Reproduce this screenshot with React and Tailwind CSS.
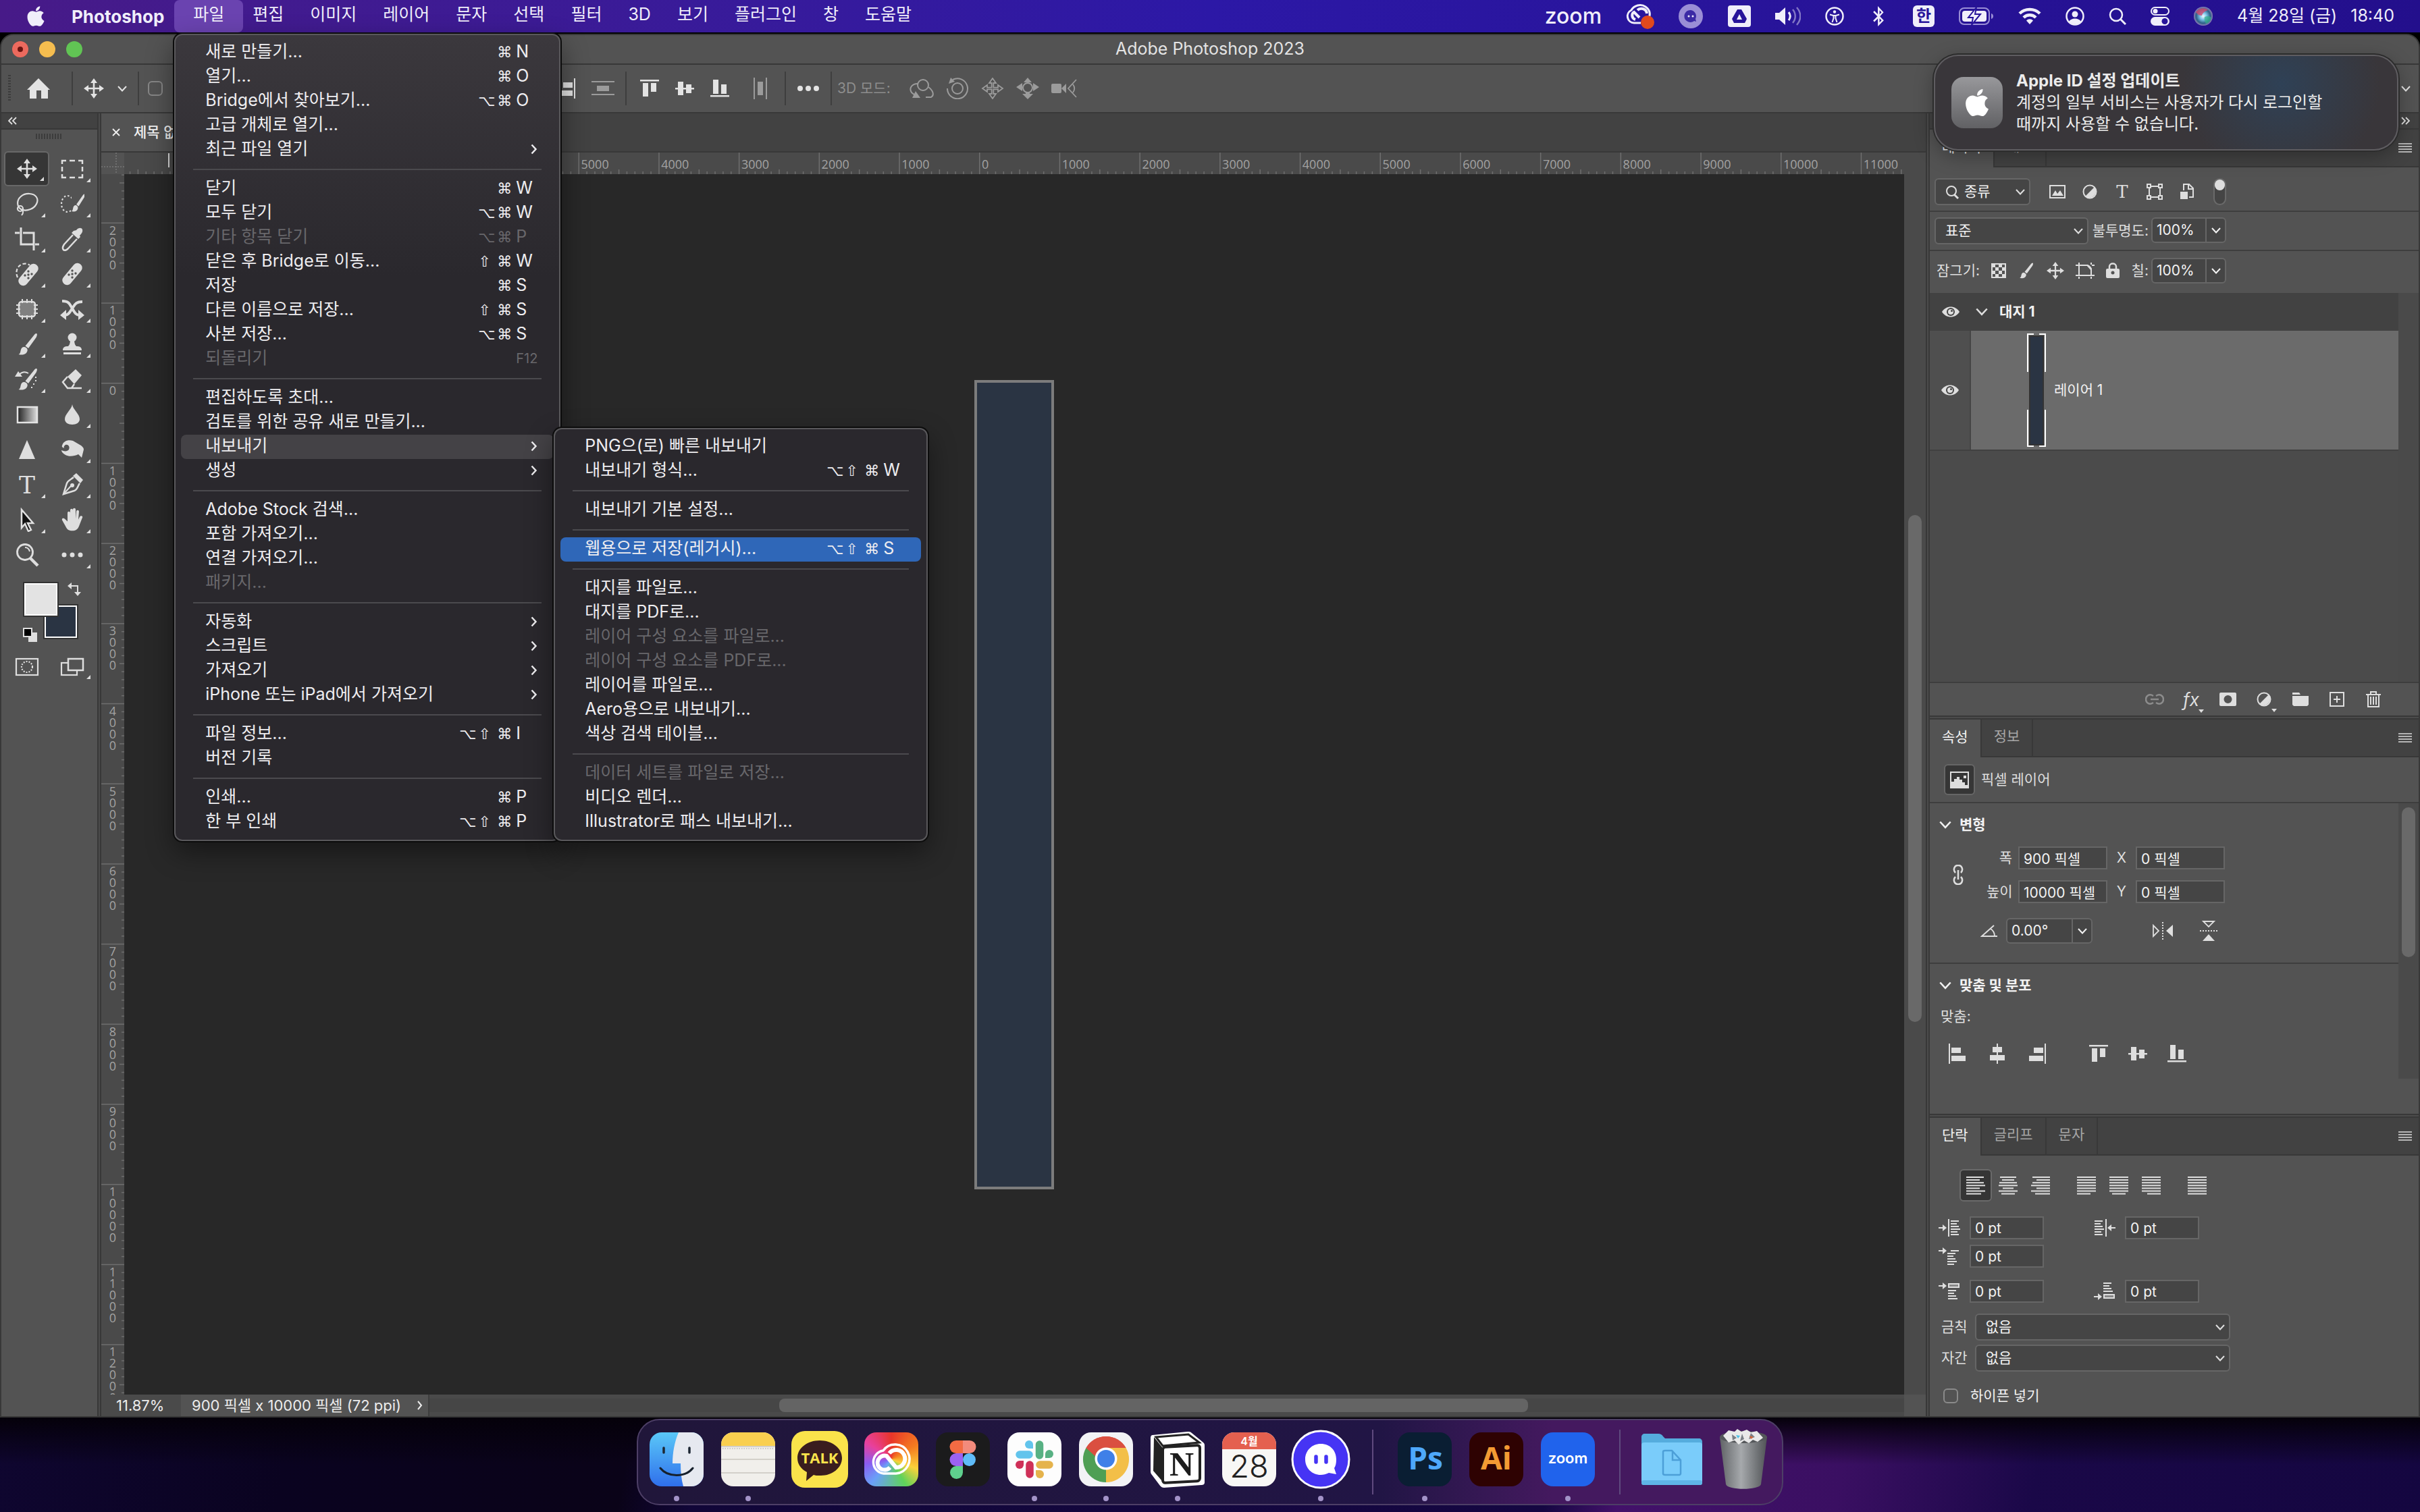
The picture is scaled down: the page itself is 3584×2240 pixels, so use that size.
import React, { useState } from 'react';
import { FaApple, FaBluetoothB } from 'react-icons/fa';

// DATA MENU
const barMenus = ['편집', '이미지', '레이어', '문자', '선택', '필터', '3D', '보기', '플러그인', '창', '도움말'];

const exportMenu = [
  { label: 'PNG으(로) 빠른 내보내기' },
  { label: '내보내기 형식...', keys: '⌥⇧⌘W' },
  null,
  { label: '내보내기 기본 설정...' },
  null,
  { label: '웹용으로 저장(레거시)...', keys: '⌥⇧⌘S', active: true },
  null,
  { label: '대지를 파일로...' },
  { label: '대지를 PDF로...' },
  { label: '레이어 구성 요소를 파일로...', off: true },
  { label: '레이어 구성 요소를 PDF로...', off: true },
  { label: '레이어를 파일로...' },
  { label: 'Aero용으로 내보내기...' },
  { label: '색상 검색 테이블...' },
  null,
  { label: '데이터 세트를 파일로 저장...', off: true },
  { label: '비디오 렌더...' },
  { label: 'Illustrator로 패스 내보내기...' },
];

const fileMenu = [
  { label: '새로 만들기...', keys: '⌘N' },
  { label: '열기...', keys: '⌘O' },
  { label: 'Bridge에서 찾아보기...', keys: '⌥⌘O' },
  { label: '고급 개체로 열기...' },
  { label: '최근 파일 열기', more: true },
  null,
  { label: '닫기', keys: '⌘W' },
  { label: '모두 닫기', keys: '⌥⌘W' },
  { label: '기타 항목 닫기', keys: '⌥⌘P', off: true },
  { label: '닫은 후 Bridge로 이동...', keys: '⇧⌘W' },
  { label: '저장', keys: '⌘S' },
  { label: '다른 이름으로 저장...', keys: '⇧⌘S' },
  { label: '사본 저장...', keys: '⌥⌘S' },
  { label: '되돌리기', fkey: 'F12', off: true },
  null,
  { label: '편집하도록 초대...' },
  { label: '검토를 위한 공유 새로 만들기...' },
  { label: '내보내기', more: true, sub: exportMenu },
  { label: '생성', more: true },
  null,
  { label: 'Adobe Stock 검색...' },
  { label: '포함 가져오기...' },
  { label: '연결 가져오기...' },
  { label: '패키지...', off: true },
  null,
  { label: '자동화', more: true },
  { label: '스크립트', more: true },
  { label: '가져오기', more: true },
  { label: 'iPhone 또는 iPad에서 가져오기', more: true },
  null,
  { label: '파일 정보...', keys: '⌥⇧⌘I' },
  { label: '버전 기록' },
  null,
  { label: '인쇄...', keys: '⌘P' },
  { label: '한 부 인쇄', keys: '⌥⇧⌘P' },
];

// ICON HELPERS
const Svg = ({ w = 36, h = 36, vb, className = '', children }) => (
  <svg width={w} height={h} viewBox={vb || `0 0 ${w} ${h}`} className={`shrink-0 ${className}`} fill="currentColor" aria-hidden="true">
    {children}
  </svg>
);

const Line = ({ d, sw = 2.5, ...rest }) => <path d={d} fill="none" stroke="currentColor" strokeWidth={sw} {...rest} />;

const Down = ({ w = 14, h = 9, className = '' }) => (
  <Svg w={w} h={h} vb="0 0 14 9" className={className}><Line d="M1 1l6 6.5L13 1" sw={2} /></Svg>
);

const movePath = 'M15 0l5 7h-3.7v6.7H23V10l7 5-7 5v-3.7h-6.7V23H20l-5 7-5-7h3.7v-6.7H7V20l-7-5 7-5v3.7h6.7V7H10z';
const MoveIcon = ({ size = 30 }) => <Svg w={size} h={size} vb="0 0 30 30"><path d={movePath} /></Svg>;

const brushShape = (
  <>
    <path d="M32 2c1.500 .5 1 3-.5 6L20 24l-4.500-3.500L28 5c1.500-2 2.800-3.300 4-3z" />
    <path d="M14 22c3 .5 5.500 3 4.500 6-1.500 5-7 6.500-13 5 3-1.500 2.500-4 3.500-7 .8-2.700 2.700-4.300 5-4z" />
  </>
);

const bandage = (
  <>
    <rect x="-7" y="-19" width="14" height="38" rx="7" transform="translate(18 18) rotate(40)" />
    <g fill="#535353">
      <circle cx="18" cy="13" r="1.700" /><circle cx="23" cy="17" r="1.700" />
      <circle cx="18" cy="18" r="1.700" /><circle cx="13" cy="19" r="1.700" /><circle cx="18" cy="23" r="1.700" />
    </g>
  </>
);

const tools = [
  { name: '이동', active: true, art: <path d={movePath} transform="translate(3 3)" /> },
  { name: '사각형 선택', art: <Line d="M3 11V6h6M14 6h8M27 6h6v5M33 15v7M33 26v5h-6M22 31h-8M9 31H3v-5M3 22v-7" /> },
  {
    name: '올가미',
    art: (
      <>
        <Line d="M9 26C3 22 2 13 9 7s19-5 23 1-1 15-9 18c-5 2-10 2-14 0" sw={2.200} />
        <circle cx="8" cy="25" r="4" fill="none" stroke="currentColor" strokeWidth="2.200" />
        <Line d="M9 26c4 2 4 5 1 9" sw={2} />
      </>
    ),
  },
  {
    name: '빠른 선택',
    art: (
      <>
        <ellipse cx="11" cy="18" rx="9" ry="12" fill="none" stroke="currentColor" strokeWidth="2.200" strokeDasharray="2.500 3" />
        <rect x="17" y="2" width="19" height="32" fill="#535353" />
        <g transform="translate(13 2) scale(.72 .82)">{brushShape}</g>
      </>
    ),
  },
  { name: '자르기', art: <Line d="M9 1v25h19M0 9h7M12 9h16v26M30 26h6" sw={3} /> },
  {
    name: '스포이드',
    art: (
      <>
        <path d="M24 5c3-4 8-4 9-1s-1 6-4 9l1 2-3 3L17 9l3-3z" />
        <Line d="M19 12L6 26c-2 3-3 6-1 8s5 0 7-2l13-14" sw={2.500} />
      </>
    ),
  },
  {
    name: '스팟 복구',
    art: (
      <>
        <Line d="M4 23C0 14 4 5 12 3c4-1 8 0 10 2" sw={2.200} strokeDasharray="5 3" />
        <g transform="translate(2 1)">{bandage}</g>
      </>
    ),
  },
  { name: '복구', art: bandage },
  {
    name: '패치',
    art: (
      <>
        <rect x="6" y="7" width="24" height="22" rx="4" fill="#808080" stroke="currentColor" strokeWidth="2.500" />
        <Line d="M11 3v6M18 3v6M25 3v6M11 27v6M18 27v6M25 27v6M2 12h6M2 18h6M2 24h6M28 12h6M28 18h6M28 24h6" sw={2} />
      </>
    ),
  },
  {
    name: '내용 인식 이동',
    art: (
      <>
        <Line d="M3 6c10 0 11 4 15 11s6 10 11 10M33 7c-10 0-11 4-15 10s-6 10-11 10" sw={4} />
        <path d="M27 19l9 8-9 7zM9 19l-9 8 9 7z" />
      </>
    ),
  },
  { name: '브러시', art: brushShape },
  {
    name: '도장',
    art: (
      <>
        <circle cx="18" cy="8" r="6.500" />
        <path d="M15 10h6c0 4 0 8 3 11 5 0 8 1 8 6H4c0-5 3-6 8-6 3-3 3-7 3-11z" />
        <rect x="5" y="30" width="26" height="3" />
      </>
    ),
  },
  {
    name: '작업 내역 브러시',
    art: (
      <>
        {brushShape}
        <Line d="M6 12c3-5 9-6 14-3" sw={2} />
        <path d="M0 14l5-8 6 8z" />
        <Line d="M31 14v8M28 24v4M25 29v4" sw={2} strokeDasharray="2 3" />
      </>
    ),
  },
  {
    name: '지우개',
    art: (
      <>
        <path d="M23 3l9 9-11 13-10-11z" />
        <Line d="M11 14l-7 8 7 9h6l4-6M10 31h22" sw={2.500} />
      </>
    ),
  },
  {
    name: '그레이디언트',
    solo: true,
    art: (
      <>
        <defs>
          <linearGradient id="toolGrad"><stop offset="0" stopColor="#222" /><stop offset="1" stopColor="#ddd" /></linearGradient>
        </defs>
        <rect x="4" y="7" width="29" height="23" fill="url(#toolGrad)" stroke="#e3e3e3" strokeWidth="2.500" />
      </>
    ),
  },
  { name: '흐림', art: <path d="M18 3c1 8 11 14 11 22 0 5-5 8-11 8S7 30 7 25C7 17 17 11 18 3z" /> },
  { name: '선명', solo: true, art: <path d="M18 4l12 28H6z" /> },
  {
    name: '번',
    art: <path fillRule="evenodd" d="M3 12C5 5 12 3 19 5l12 7c2 2 4 3 4 6l-3 12-5-5c-6 3-14 4-19 1-4-2-6-5-6-7 4 2 9 2 11-1 2-4-1-8-5-7-2 1-3 3-2 5-2-1-4-2-3-4z" />,
  },
  { name: '문자', art: <text x="18" y="31" textAnchor="middle" fontFamily="DejaVu Serif, serif" fontSize="36">T</text> },
  {
    name: '펜',
    art: (
      <>
        <path d="M24 1l10 10-4 5L19 5z" />
        <Line d="M20 7c-3 3-8 4-10 9L5 32l16-5c5-2 5-7 8-11" sw={2.500} />
        <Line d="M5 32l11-12" sw={2} /><circle cx="18" cy="19" r="3" />
      </>
    ),
  },
  { name: '패스 선택', art: <path d="M10 3l17 20h-8l5 10-4 2-5-11-5 6z" fill="#111" stroke="#e0e0e0" strokeWidth="2.500" /> },
  {
    name: '손',
    art: <path d="M9 21V8c0-3 4-3 4 0v9V4c0-3 4-3 4 0v13V3c0-3 4-3 4 0v14l1-11c0-3 4-3 4 0l-1 12 2-4c2-3 5-1 4 1l-5 13c-2 5-5 7-10 7-6 0-8-3-10-7L1 19c-1-3 2-4 4-2z" transform="translate(2 0) scale(1 .98)" />,
  },
  {
    name: '돋보기',
    solo: true,
    art: (
      <>
        <circle cx="15" cy="14" r="11.500" fill="none" stroke="currentColor" strokeWidth="2.800" />
        <Line d="M15 7c4 0 6 2 7 6" sw={2} /><Line d="M23 23l11 11" sw={4.500} />
      </>
    ),
  },
  { name: '도구 모음 편집', art: <><circle cx="6" cy="18" r="3.500" /><circle cx="18" cy="18" r="3.500" /><circle cx="30" cy="18" r="3.500" /></> },
];

// ALIGN ICONS
const alignArt = {
  left: <><rect x="0" y="0" width="2" height="30" /><rect x="4" y="6" width="14" height="8" /><rect x="4" y="18" width="21" height="8" /></>,
  center: <><rect x="13" y="0" width="2" height="30" /><rect x="7" y="5" width="14" height="8" /><rect x="3" y="17" width="22" height="8" /></>,
  right: <><rect x="26" y="0" width="2" height="30" /><rect x="10" y="6" width="14" height="8" /><rect x="3" y="18" width="21" height="8" /></>,
  top: <><rect x="0" y="2" width="28" height="2.500" /><rect x="4" y="7" width="8" height="20" /><rect x="16" y="7" width="8" height="13" /></>,
  middle: <><rect x="0" y="14" width="28" height="2.500" /><rect x="4" y="5" width="8" height="20" /><rect x="16" y="9" width="8" height="13" /></>,
  bottom: <><rect x="0" y="25" width="28" height="2.500" /><rect x="4" y="2" width="8" height="21" /><rect x="16" y="9" width="8" height="14" /></>,
};
const AlignIcon = ({ kind }) => <Svg w={28} h={30}>{alignArt[kind]}</Svg>;

// Baris teks: [x, lebar]
const paraRows = {
  left: [[0, 26], [0, 20], [0, 26], [0, 28], [0, 20], [0, 28], [0, 22]],
  center: [[2, 24], [5, 18], [1, 26], [0, 28], [6, 16], [0, 28], [4, 20]],
  right: [[2, 26], [8, 20], [2, 26], [0, 28], [8, 20], [0, 28], [6, 22]],
  jl: [[0, 28], [0, 28], [0, 28], [0, 28], [0, 28], [0, 28], [0, 20]],
  jc: [[0, 28], [0, 28], [0, 28], [0, 28], [0, 28], [0, 28], [4, 20]],
  jr: [[0, 28], [0, 28], [0, 28], [0, 28], [0, 28], [0, 28], [8, 20]],
  jf: [[0, 28], [0, 28], [0, 28], [0, 28], [0, 28], [0, 28], [0, 28]],
};

const ParaButton = ({ kind, active }) => (
  <button aria-label={`align ${kind}`} className={`flex h-12 w-12 items-center justify-center rounded-md ${active ? 'border-2 border-[#6a6a6a] bg-[#353535]' : ''}`}>
    <Svg w={28} h={27}>
      {paraRows[kind].map(([x, w], i) => <rect key={i} x={x} y={i * 4.100} width={w} height="2" />)}
    </Svg>
  </button>
);

const IndentIcon = ({ kind }) => {
  const rows = (x, y, n) => Array.from({ length: n }, (_, i) => <rect key={i} x={x} y={y + i * 4} width={[12, 9, 12, 14, 10, 12, 12][i]} height="2" />);
  const arrow = (x, y, flip) => (
    <g transform={flip ? `translate(${x + 11} ${y}) scale(-1 1)` : `translate(${x} ${y})`}>
      <rect x="0" y="-1" width="7" height="2" /><path d="M6-5l6 5-6 5z" />
    </g>
  );
  return (
    <Svg w={32} h={28}>
      {kind === 'left' && <>{arrow(0, 14)}<rect x="14" y="1" width="2" height="26" />{rows(18, 3, 6)}</>}
      {kind === 'right' && <>{rows(1, 3, 6)}<rect x="17" y="1" width="2" height="26" />{arrow(21, 14, true)}</>}
      {kind === 'first' && <>{arrow(0, 6)}<rect x="18" y="5" width="12" height="2" />{rows(13, 9, 5)}</>}
      {kind === 'before' && <>{arrow(0, 6)}<rect x="15" y="3" width="15" height="5" fill="#888" stroke="currentColor" strokeWidth="2" />{rows(14, 12, 4)}</>}
      {kind === 'after' && <>{arrow(0, 22)}{rows(14, 1, 4)}<rect x="15" y="19" width="15" height="5" fill="#888" stroke="currentColor" strokeWidth="2" /></>}
    </Svg>
  );
};

// MENU
const Keys = ({ keys }) => (
  <span className="flex items-center pr-7">
    {[...keys].map((k, i) => (
      <span key={i} className={`w-7 ${i === keys.length - 1 ? '' : "font-['DejaVu_Sans',sans-serif] text-[22px]"}`}>{k}</span>
    ))}
  </span>
);

const Menu = ({ items, className }) => (
  <ul role="menu" className={`absolute z-20 rounded-xl border-2 border-[#59585b] bg-[#2a282d] p-2 text-[#eeedf0] shadow-[0_0_0_2px_#0c0c0c,0_16px_40px_rgba(0,0,0,0.45)] ${className}`}>
    {items.map((item, i) =>
      item === null ? (
        <li key={i} role="separator" className="mx-[18px] my-[10px] h-[2px] bg-[#4b4a4e]" />
      ) : (
        <li key={i} className="relative">
          <button
            role="menuitem"
            disabled={item.off}
            className={`flex h-9 w-full items-center justify-between rounded-lg pb-[2px] pl-9 text-left whitespace-nowrap ${item.off ? 'text-[#68676b]' : ''} ${item.active ? 'bg-[#2f67b8]' : ''} ${item.sub ? 'bg-[#444246]' : ''}`}
          >
            <span>{item.label}</span>
            {item.keys && <Keys keys={item.keys} />}
            {item.fkey && <span className="w-14 text-xl">{item.fkey}</span>}
            {item.more && <Svg w={10} h={16} className="mr-6"><Line d="M1.500 1.500l6 6.500-6 6.500" sw={2.500} /></Svg>}
          </button>
          {item.sub && <Menu items={item.sub} className="-top-[10px] left-full w-[554px]" />}
        </li>
      )
    )}
  </ul>
);

const CloudIcon = () => (
  <Svg w={42} h={40}>
    <Line d="M22 30H12A10 10 0 0 1 8 11C12 4 22 1 29 6s8 12 4 18" sw={3} />
    <Line d="M20 22l-8-8c-4 2-4 9 2 11M17 11c4-4 13-3 14 5" sw={4} />
    <circle cx="32" cy="29" r="10" fill="#e0491d" />
  </Svg>
);

const MenuBar = () => (
  <header className="flex h-12 shrink-0 items-center bg-linear-to-r from-[#471a88] via-[#2c18a6] to-[#230f8c] text-[#f0eefa]">
    <nav className="flex h-full items-center pl-10">
      <button aria-label="Apple"><FaApple size={34} className="-mx-1" /></button>
      <button className="ml-10 text-[26px] font-bold">Photoshop</button>
      <div className="relative -mr-[14px] ml-[15px] h-full">
        <button className="h-full rounded-lg bg-[#6a43b0] px-7 pb-1">파일</button>
        <Menu items={fileMenu} className="top-full left-0 mt-[2px] w-[572px] bg-linear-to-b from-[#3b383d] via-[#2a282d] via-30% to-[#2a282d]" />
      </div>
      {barMenus.map((m) => (
        <button key={m} className="-mr-[17px] h-full px-7 pb-1 whitespace-nowrap">{m}</button>
      ))}
    </nav>
    <div className="ml-auto flex items-center gap-9 pr-[38px] whitespace-nowrap">
      <span className="text-[32px] leading-8 font-medium">zoom</span>
      <CloudIcon />
      <Svg w={37} h={37}>
        <circle cx="18" cy="18" r="18" fill="#9a8ed6" />
        <path d="M18 9a9 9 0 1 0 5 16l3 1-1-4A9 9 0 0 0 18 9z" fill="#3b2aa5" />
        <circle cx="15" cy="18" r="1.500" /><circle cx="21" cy="18" r="1.500" />
      </Svg>
      <Svg w={34} h={32}>
        <rect width="34" height="32" rx="4" />
        <path d="M14 6h6l8 14-3 6H9l-3-6z" fill="#27149a" /><path d="M17 13l4 8h-8z" />
      </Svg>
      <Svg w={38} h={32}>
        <path d="M0 11h6l9-8v26l-9-8H0z" />
        <Line d="M20 10c3 4 3 8 0 12" sw={3} /><Line d="M26 6c5 6 5 14 0 20M32 3c7 8 7 18 0 26" sw={2.500} opacity=".45" />
      </Svg>
      <Svg w={28} h={28}>
        <circle cx="14" cy="14" r="12.500" fill="none" stroke="currentColor" strokeWidth="2.500" />
        <circle cx="14" cy="7.500" r="2.200" /><Line d="M7 11.500l5 1.500h4l5-1.500M12.500 13v4l-2 6M15.500 13v4l2 6" sw={2} />
      </Svg>
      <FaBluetoothB size={30} />
      <span className="flex h-8 w-8 items-center justify-center rounded-md bg-[#f0eefa] text-2xl leading-8 font-bold text-[#27149a]">한</span>
      <Svg w={52} h={26}>
        <rect x="1" y="1" width="44" height="24" rx="7" fill="none" stroke="#9a8ed6" strokeWidth="2" />
        <rect x="5" y="5" width="36" height="16" rx="4" />
        <path d="M26 0L14 15h7l-2 11 13-16h-8z" stroke="#27149a" strokeWidth="2" />
        <path d="M48 9c4 1 4 7 0 8z" fill="#9a8ed6" />
      </Svg>
      <Svg w={34} h={26}>
        <Line d="M2 9c8-8 22-8 30 0" sw={4.500} /><Line d="M8 15c5-5 13-5 18 0" sw={4.500} /><path d="M17 25l-5-5.500c3-3 7-3 10 0z" />
      </Svg>
      <Svg w={28} h={28}>
        <circle cx="14" cy="14" r="12.500" fill="none" stroke="currentColor" strokeWidth="2.500" />
        <circle cx="14" cy="11" r="4.500" /><path d="M5 22c3-6 15-6 18 0-5 5-13 5-18 0z" />
      </Svg>
      <Svg w={26} h={26}><circle cx="11" cy="11" r="9" fill="none" stroke="currentColor" strokeWidth="2.500" /><Line d="M17 17l8 8" sw={3} /></Svg>
      <Svg w={28} h={28}>
        <rect x="1" y="1" width="26" height="11" rx="5.500" fill="none" stroke="currentColor" strokeWidth="2" /><circle cx="7" cy="6.500" r="3.500" />
        <rect x="0" y="15" width="28" height="13" rx="6.500" /><circle cx="21" cy="21.500" r="4.500" fill="#27149a" />
      </Svg>
      <Svg w={28} h={28}>
        <defs>
          <radialGradient id="siri">
            <stop offset="0" stopColor="#f2fbff" /><stop offset=".35" stopColor="#7cc4e8" /><stop offset=".75" stopColor="#2c5f86" /><stop offset="1" stopColor="#8f7fb8" />
          </radialGradient>
        </defs>
        <circle cx="14" cy="14" r="14" fill="url(#siri)" />
        <path d="M3 8c4-6 13-8 18-3-4 1-8 4-9 8-4 0-7-2-9-5z" fill="#d2496f" opacity=".8" />
        <path d="M16 15c4-2 8-1 10 1-1 5-4 8-8 9-2-3-3-7-2-10z" fill="#34b28a" opacity=".7" />
      </Svg>
      <span className="-mr-4">4월 28일 (금)</span>
      <span>18:40</span>
    </div>
  </header>
);

const Divider = () => <span className="h-[50px] w-[2px] shrink-0 bg-[#3e3e3e]" />;

const OptionsBar = () => (
  <div className="flex h-[70px] shrink-0 items-center bg-[#535353] text-[#e3e3e3]">
    <span className="ml-[10px] h-10 w-1 bg-[repeating-linear-gradient(#3c3c3c_0_2px,transparent_2px_4px)]" />
    <button aria-label="홈" className="ml-6"><Svg w={34} h={30}><path d="M17 0l17 17h-3v13H21V18h-7v12H4V17H0z" /></Svg></button>
    <span className="w-8" />
    <Divider />
    <button aria-label="이동 도구" className="ml-4 flex items-center gap-5"><MoveIcon /><Down /></button>
    <span className="w-4" />
    <Divider />
    <input type="checkbox" aria-label="자동 선택" className="ml-[13px] h-[22px] w-[22px] shrink-0 appearance-none rounded-md border-2 border-[#868686]" />
    <span className="w-[583px] shrink-0" />
    <AlignIcon kind="right" />
    <Svg w={34} h={22} className="ml-6 text-[#9b9b9b]"><rect width="34" height="2" /><rect x="8" y="7" width="18" height="8" /><rect y="19" width="34" height="2" /></Svg>
    <span className="w-4" />
    <Divider />
    <div className="ml-5 flex items-center gap-6">
      <AlignIcon kind="top" />
      <AlignIcon kind="middle" />
      <AlignIcon kind="bottom" />
    </div>
    <Svg w={20} h={32} className="ml-9 text-[#9b9b9b]"><rect width="2" height="32" /><rect x="6" y="6" width="8" height="20" /><rect x="18" width="2" height="32" /></Svg>
    <span className="w-[26px]" />
    <Divider />
    <button aria-label="더 보기" className="mx-[17px]"><Svg w={32} h={8}><circle cx="4" cy="4" r="4" /><circle cx="16" cy="4" r="4" /><circle cx="28" cy="4" r="4" /></Svg></button>
    <Divider />
    <span className="ml-2 text-[21px] whitespace-nowrap text-[#8d8d8d]">3D 모드:</span>
    <div className="ml-7 flex items-center gap-[18px] text-[#9b9b9b]">
      <Svg w={36} h={32}>
        <circle cx="20" cy="11" r="8" fill="none" stroke="currentColor" strokeWidth="2" />
        <Line d="M12 9C3 9-1 16 3 22l5 4M28 14c7 5 9 12 4 15h-8" sw={2} /><path d="M9 20l7 10H4z" />
      </Svg>
      <Svg w={34} h={32}>
        <circle cx="17" cy="16" r="8" fill="none" stroke="currentColor" strokeWidth="2" />
        <Line d="M2 16a15 15 0 1 0 8-13" sw={2} /><path d="M7 0l6 6-9 3z" />
      </Svg>
      <Svg w={34} h={32} vb="-1 -1 32 32"><path d={movePath} fill="none" stroke="currentColor" strokeWidth="1.800" /></Svg>
      <Svg w={34} h={32}>
        <circle cx="17" cy="15" r="7" fill="none" stroke="currentColor" strokeWidth="2" />
        <path d="M17 0l6 7H11zM0 14l9-6v12zM34 14l-9-6v12zM17 32l-8-8h5v-2h6v2h5z" />
      </Svg>
      <Svg w={38} h={30}><rect y="8" width="15" height="14" rx="2" /><path d="M15 15l7-7v14z" /><Line d="M37 2L25 15l12 13M32 9c3 4 3 8 0 12" sw={1.800} /></Svg>
    </div>
    <button aria-label="펼치기" className="mr-3 ml-auto"><Down /></button>
  </div>
);

const Toolbar = () => (
  <aside className="flex w-36 shrink-0 flex-col border-r-2 border-[#383838] bg-[#535353] text-[#dedede]">
    <div className="flex h-6 items-center border-b-2 border-[#383838] bg-[#424242] pl-[10px]">
      <Svg w={14} h={12}><Line d="M6 1L1 6l5 5M12 1L7 6l5 5" sw={1.800} /></Svg>
    </div>
    <span className="mx-auto mt-[6px] h-2 w-10 bg-[repeating-linear-gradient(90deg,#3c3c3c_0_2px,transparent_2px_4px)]" />
    <div className="mt-[18px] grid grid-cols-2 px-1">
      {tools.map((t) => (
        <button key={t.name} aria-label={t.name} className={`relative flex h-[52px] items-center justify-center rounded-md ${t.active ? 'border-2 border-[#686868] bg-[#363636]' : ''}`}>
          <Svg>{t.art}</Svg>
          {!t.solo && <Svg w={6} h={6} className="absolute right-[6px] bottom-[6px]"><path d="M6 0v6H0z" /></Svg>}
        </button>
      ))}
    </div>
    <div className="relative mx-8 mt-[14px] h-[92px]">
      <span className="absolute top-[33px] left-[30px] h-[52px] w-[52px] border-2 border-[#333] bg-[#2a3443] outline-2 -outline-offset-4 outline-white" />
      <span className="absolute top-0 left-0 h-[52px] w-[53px] border-2 border-[#333] bg-[#e3e3e3] outline-2 -outline-offset-4 outline-white" />
      <Svg w={20} h={20} className="absolute top-[1px] left-[66px]"><Line d="M5 5h10v10" sw={2} /><path d="M0 5l6-5v10zM10 14h10l-5 6z" /></Svg>
      <Svg w={22} h={21} className="absolute top-[68px] left-0"><rect x="8" y="7" width="13" height="14" /><rect x="1" y="1" width="12" height="12" fill="#000" stroke="#dedede" strokeWidth="2" /></Svg>
    </div>
    <div className="mt-5 grid grid-cols-2 px-1">
      <button aria-label="빠른 마스크" className="flex justify-center">
        <Svg w={36} h={28}>
          <rect x="2" y="2" width="32" height="24" fill="none" stroke="currentColor" strokeWidth="2.200" />
          <circle cx="18" cy="14" r="8" fill="none" stroke="currentColor" strokeWidth="2.200" strokeDasharray="2 2" />
        </Svg>
      </button>
      <button aria-label="화면 모드" className="relative flex justify-center">
        <Svg w={36} h={28}>
          <rect x="2" y="8" width="23" height="18" fill="none" stroke="currentColor" strokeWidth="2.200" />
          <rect x="12" y="2" width="22" height="17" fill="#535353" stroke="currentColor" strokeWidth="2.500" />
        </Svg>
        <Svg w={6} h={6} className="absolute right-[6px] -bottom-[4px]"><path d="M6 0v6H0z" /></Svg>
      </button>
    </div>
  </aside>
);

// RULER: 1000px dokumen = 118.7px di layar
const STEP = 118.7;
const marks = Array.from({ length: 24 }, (_, i) => i - 11);

const RulerX = () => (
  <svg className="h-8 min-w-0 flex-1" aria-hidden="true">
    {marks.map((k) => {
      const x = 1266 + k * STEP;
      return (
        <g key={k} fill="#6e6e6e">
          <rect x={x} y="0" width="1.500" height="32" />
          {[1, 2, 3, 4, 5, 6, 7, 8, 9].map((n) => <rect key={n} x={x + n * STEP / 10} y={n === 5 ? 25 : 28} width="1.500" height="8" />)}
          {k > -8 && k < 12 && <text x={x + 4} y="24" fontSize="18" fill="#a3a3a3" fontFamily="Open Sans, sans-serif">{Math.abs(k * 1000)}</text>}
        </g>
      );
    })}
    <rect x="65" y="1" width="2" height="21" fill="#ddd" />
  </svg>
);

const RulerY = () => (
  <svg className="w-[34px] shrink-0 bg-[#4a4a4a]" aria-hidden="true">
    {marks.filter((k) => k > -4).map((k) => {
      const y = 309 + k * STEP;
      return (
        <g key={k} fill="#6e6e6e">
          <rect x="0" y={y} width="34" height="1.500" />
          {[1, 2, 3, 4, 5, 6, 7, 8, 9].map((n) => <rect key={n} x={n === 5 ? 27 : 30} y={y + n * STEP / 10} width="8" height="1.500" />)}
          {k > -3 && [...String(Math.abs(k * 1000))].map((c, i) => (
            <text key={i} x="17" y={y + 18 + i * 17} textAnchor="middle" fontSize="18" fill="#a3a3a3" fontFamily="Open Sans, sans-serif">{c}</text>
          ))}
        </g>
      );
    })}
  </svg>
);

const Document = () => (
  <main className="ml-[2px] flex min-w-0 flex-1 flex-col border-x-2 border-[#383838] bg-[#4a4a4a]">
    <div className="flex h-14 shrink-0 bg-[#424242]">
      <div className="flex w-[420px] items-center gap-5 bg-[#535353] pl-4 text-[21px] font-medium text-[#f0f0f0]">
        <button aria-label="닫기"><Svg w={12} h={12}><Line d="M1 1l10 10M11 1L1 11" sw={1.800} /></Svg></button>
        <span>제목 없음-1</span>
      </div>
    </div>
    <div className="flex min-h-0 flex-1 border-t-2 border-[#383838]">
      <div className="flex min-w-0 flex-1 flex-col">
        <div className="flex h-8 shrink-0 bg-[#4a4a4a]">
          <Svg w={34} h={32} className="bg-[#535353]"><Line d="M22 0v32M0 21h34" sw={1.500} stroke="#777" strokeDasharray="2 2" /></Svg>
          <RulerX />
        </div>
        <div className="flex flex-1">
          <RulerY />
          <div className="flex flex-1 items-center justify-center bg-[#282828]">
            <div className="h-[1199px] w-[118px] border-4 border-[#7c7c7c] bg-[#2a3443]" />
          </div>
        </div>
      </div>
      <div className="flex w-8 shrink-0 flex-col items-center">
        <div className="grow-[537]" />
        <div className="w-5 grow-[751] rounded-full bg-[#696969]" />
        <div className="grow-[552]" />
      </div>
    </div>
    <footer className="flex h-8 shrink-0 items-center text-[22px] text-[#ececec]">
      <span className="w-[118px] pl-[22px]">11.87%</span>
      <span className="flex h-full items-center border-r-2 border-[#3e3e3e] bg-[#535353] pl-4 whitespace-nowrap">
        900 픽셀 x 10000 픽셀 (72 ppi)
        <Svg w={8} h={14} className="mr-2 ml-6"><Line d="M1 1l5 6-5 6" sw={2} /></Svg>
      </span>
      <div className="flex flex-1 bg-[#464646]">
        <div className="grow-[518]" />
        <div className="h-5 grow-[1109] rounded-lg bg-[#646464]" />
        <div className="grow-[557]" />
      </div>
      <span className="h-full w-8 bg-[#535353]" />
    </footer>
  </main>
);

// PANEL PARTS
const Burger = () => (
  <button aria-label="패널 메뉴" className="mr-[10px] ml-auto">
    <Svg w={20} h={14} className="text-[#b5b5b5]"><path d="M0 0h20v2H0zM0 4h20v2H0zM0 8h20v2H0zM0 12h20v2H0z" /></Svg>
  </button>
);

const Tabs = ({ names }) => (
  <div className="flex h-14 shrink-0 items-center border-b-2 border-[#383838] bg-[#424242]">
    {names.map((n, i) => (
      <button key={n} className={`-mb-[2px] h-14 border-r-2 border-[#383838] px-[18px] pb-1 ${i === 0 ? 'bg-[#535353] text-[#f2f2f2]' : 'border-b-2 text-[#a6a6a6]'}`}>{n}</button>
    ))}
    <Burger />
  </div>
);

const Select = ({ id, value, className = '', pad = 'pl-4' }) => (
  <span className={`relative flex h-10 ${className}`}>
    <select id={id} aria-label={value} className={`w-full appearance-none rounded-md border-2 border-[#666] bg-[#454545] text-[#f2f2f2] ${pad}`}>
      <option>{value}</option>
    </select>
    <Down className="pointer-events-none absolute top-4 right-2" />
  </span>
);

const Combo = ({ id, value, width }) => (
  <span className="flex h-[38px] rounded-md border-2 border-[#666] bg-[#454545] text-[#f2f2f2]">
    <input id={id} aria-label={value} defaultValue={value} className={`min-w-0 bg-transparent pl-[6px] outline-none ${width}`} />
    <button aria-label="목록" className="flex w-[29px] items-center justify-center border-l-2 border-[#666]"><Down /></button>
  </span>
);

const Field = ({ id, value, className }) => (
  <input id={id} aria-label={value} defaultValue={value} className={`h-[34px] border-2 border-[#666] bg-[#454545] pl-[6px] text-[#f2f2f2] outline-none ${className}`} />
);

const Eye = () => (
  <Svg w={26} h={16}>
    <path d="M0 8C6-2 20-2 26 8c-6 10-20 10-26 0z" /><circle cx="13" cy="8" r="6" fill="#454545" /><circle cx="13" cy="8" r="4" />
    <circle cx="14.500" cy="6.500" r="1.500" fill="#454545" />
  </Svg>
);

const HalfCircle = () => (
  <Svg w={22} h={22}><circle cx="11" cy="11" r="9.500" fill="none" stroke="currentColor" strokeWidth="2" /><path d="M18 4A10 10 0 0 1 4 18z" /></Svg>
);

const Slot = ({ name, className = 'w-12', children }) => (
  <button aria-label={name} className={`flex items-center justify-center ${className}`}>{children}</button>
);

const LayersPanel = () => (
  <section className="flex flex-1 flex-col border-b-2 border-[#383838] bg-[#535353]">
    <Tabs names={['레이어', '패스']} />
    <div className="flex border-b-2 border-[#3e3e3e] pt-4 pb-2 pl-[7px]">
      <span className="relative">
        <Select value="종류" className="w-[142px]" pad="pl-[42px]" />
        <Svg w={22} h={22} className="absolute top-[10px] left-4"><circle cx="9" cy="9" r="7" fill="none" stroke="currentColor" strokeWidth="2" /><Line d="M13 14l6 6" sw={3} /></Svg>
      </span>
      <div className="ml-4 flex">
        <Slot name="픽셀"><Svg w={24} h={20}><rect x="1" y="1" width="22" height="18" fill="none" stroke="currentColor" strokeWidth="2" /><path d="M4 16l5-8 3 5 4-5 5 8z" /></Svg></Slot>
        <Slot name="조정"><HalfCircle /></Slot>
        <Slot name="문자"><Svg w={24} h={22}><text x="12" y="20" textAnchor="middle" fontFamily="DejaVu Serif, serif" fontSize="26">T</text></Svg></Slot>
        <Slot name="모양">
          <Svg w={24} h={24}><rect x="4" y="4" width="16" height="16" fill="none" stroke="currentColor" strokeWidth="2" /><g fill="#535353" stroke="currentColor" strokeWidth="2"><rect x="1" y="1" width="5" height="5" /><rect x="18" y="1" width="5" height="5" /><rect x="1" y="18" width="5" height="5" /><rect x="18" y="18" width="5" height="5" /></g></Svg>
        </Slot>
        <Slot name="고급 개체"><Svg w={22} h={24}><Line d="M6 10V1h8l6 6v13h-6M13 1v7h7" sw={2} /><rect x="1" y="12" width="11" height="11" /></Svg></Slot>
        <Slot name="필터 켜기">
          <span className="flex h-10 w-[19px] justify-center rounded-full border-2 border-[#6a6a6a] bg-[#454545]"><span className="h-4 w-4 rounded-full bg-[#dedede]" /></span>
        </Slot>
      </div>
    </div>
    <div className="flex border-b-2 border-[#3e3e3e] py-2 pl-[7px]">
      <div className="flex w-[317px] items-center justify-between">
        <Select value="표준" className="w-[228px]" pad="pl-[14px]" />
        <label htmlFor="opacity">불투명도:</label>
      </div>
      <span className="ml-1"><Combo id="opacity" value="100%" width="w-[78px]" /></span>
    </div>
    <div className="flex pt-[10px] pb-[14px] pl-[10px]">
      <div className="flex w-[314px] items-center justify-between">
        <span>잠그기:</span>
        <Svg w={22} h={22}><rect x="1" y="1" width="20" height="20" fill="none" stroke="currentColor" strokeWidth="2" /><path d="M1 1h5v5H1zM11 1h5v5h-5zM6 6h5v5H6zM16 6h5v5h-5zM1 11h5v5H1zM11 11h5v5h-5zM6 16h5v5H6zM16 16h5v5h-5z" /></Svg>
        <Svg w={26} h={26} vb="3 0 32 36">{brushShape}</Svg>
        <MoveIcon size={26} />
        <Svg w={28} h={24}><Line d="M5 4v15h18V9l-5-5zM0 4h4M5 0v3M23 0v3M24 4h4M0 19h4M24 19h4M5 21v3M23 21v3" sw={2} /><path d="M16 4h4l3 3v5z" /></Svg>
        <Svg w={20} h={24}><rect y="9" width="20" height="14" rx="2" /><Line d="M5 10V6c0-6 10-6 10 0v4" sw={2.500} /><circle cx="10" cy="15" r="2.500" fill="#535353" /></Svg>
        <label htmlFor="fill">칠:</label>
      </div>
      <span className="ml-1"><Combo id="fill" value="100%" width="w-[78px]" /></span>
    </div>
    <div className="flex flex-1 border-b-2 border-[#3e3e3e]">
      <div className="flex-1 bg-[#4b4b4b]">
        <div className="flex h-14 items-center bg-[#424242] pl-[18px]">
          <Eye /><Down w={18} h={12} className="ml-6" /><span className="ml-[17px] font-bold text-[#f2f2f2]">대지 1</span>
        </div>
        <div className="flex h-44 bg-[#6b6b6b]">
          <div className="flex w-[61px] items-center justify-center border-r-2 border-[#454545] bg-[#4f4f4f]"><Eye /></div>
          <Svg w={28} h={170} className="mt-1 ml-[83px]">
            <rect x="4" y="4" width="20" height="161" fill="#2a3443" stroke="#333" strokeWidth="2" />
            <Line d="M10 1H1v56M18 1h9v56M10 167H1v-54M18 167h9v-54" sw={2} stroke="#fff" />
          </Svg>
          <span className="self-center pl-3 text-[#f2f2f2]">레이어 1</span>
        </div>
        <div className="h-[2px] bg-[#414141]" />
      </div>
      <div className="w-[30px] bg-[#4a4a4a]" />
    </div>
    <div className="flex h-12 items-center justify-end pr-10">
      <Slot name="연결" className="w-[54px] text-[#8c8c8c]"><Svg w={28} h={16}><Line d="M12 3C6-1 1 3 1 8s5 9 11 5M16 3c6-4 11 0 11 5s-5 9-11 5M8 8h12" sw={2.500} /></Svg></Slot>
      <Slot name="효과" className="relative w-[54px] text-[26px] italic">fx<Svg w={8} h={5} className="absolute right-2 bottom-0"><path d="M0 0h8L4 5z" /></Svg></Slot>
      <Slot name="마스크" className="w-[54px]"><Svg w={25} h={20}><rect width="25" height="20" rx="2" /><circle cx="12.500" cy="10" r="6" fill="#535353" /></Svg></Slot>
      <Slot name="조정 레이어" className="relative w-[54px]"><HalfCircle /><Svg w={8} h={5} className="absolute right-2 -bottom-2"><path d="M0 0h8L4 5z" /></Svg></Slot>
      <Slot name="그룹" className="w-[54px]"><Svg w={24} h={20}><path d="M0 0h10l2 3H0zM0 5h24v13l-2 2H2l-2-2z" /></Svg></Slot>
      <Slot name="새 레이어" className="w-[54px]"><Svg w={22} h={22}><rect x="1" y="1" width="20" height="20" fill="none" stroke="currentColor" strokeWidth="2" /><Line d="M11 6v10M6 11h10" sw={2} /></Svg></Slot>
      <Slot name="삭제" className="w-[54px]"><Svg w={22} h={24}><Line d="M0 5h22M7 4V1h8v3M3 6v17h16V6M7 8v12M11 8v12M15 8v12" sw={2} /></Svg></Slot>
    </div>
  </section>
);

const SectionTitle = ({ children }) => (
  <h3 className="flex h-8 items-center gap-3 pl-[14px] font-bold text-[#f2f2f2]"><Down w={18} h={12} />{children}</h3>
);

const PropertiesPanel = () => (
  <section className="border-y-2 border-[#383838] bg-[#535353]">
    <Tabs names={['속성', '정보']} />
    <div className="flex h-[68px] items-center gap-[9px] border-b-2 border-[#3e3e3e] pl-[21px]">
      <span className="flex h-[46px] w-[46px] items-center justify-center rounded-md border-2 border-[#666] bg-[#363636]">
        <Svg w={28} h={25}>
          <rect x="1" y="1" width="26" height="23" fill="none" stroke="currentColor" strokeWidth="2" />
          <path d="M2 24V15h4v-4h4v-3h4v4h4v4h4v4h4v4z" /><path d="M20 6h4v4h-4z" />
        </Svg>
      </span>
      픽셀 레이어
    </div>
    <div className="flex">
      <div className="flex-1">
        <div className="border-b-2 border-[#3e3e3e] pt-4 pb-7">
          <SectionTitle>변형</SectionTitle>
          <div className="mt-4 flex items-center">
            <button aria-label="비율 고정" className="flex w-[84px] justify-center">
              <Svg w={16} h={30}><Line d="M4 12C0 8 2 1 8 1s8 7 4 11M4 18c-4 4-2 11 4 11s8-7 4-11M8 8v14" sw={2.500} /></Svg>
            </button>
            <div className="grid grid-cols-[38px_132px_24px_132px] items-center gap-x-[9px] gap-y-4">
              <label htmlFor="pw" className="text-right">폭</label><Field id="pw" value="900 픽셀" className="min-w-0" />
              <label htmlFor="px" className="text-center">X</label><Field id="px" value="0 픽셀" className="min-w-0" />
              <label htmlFor="ph" className="text-right whitespace-nowrap">높이</label><Field id="ph" value="10000 픽셀" className="min-w-0" />
              <label htmlFor="py" className="text-center">Y</label><Field id="py" value="0 픽셀" className="min-w-0" />
            </div>
          </div>
          <div className="mt-[22px] flex items-center pl-[75px]">
            <Svg w={26} h={18} className="mr-3"><Line d="M20 1L2 17h23M15 6c5 3 6 7 6 11" sw={2} /></Svg>
            <Combo value="0.00°" width="w-[95px]" />
            <Slot name="가로로 뒤집기" className="ml-[89px] w-[30px]"><Svg w={30} h={26}><Line d="M1 5v16l8-8z" sw={1.800} /><path d="M30 4v18l-10-9z" /><Line d="M15 0v26" sw={2} strokeDasharray="2 2" /></Svg></Slot>
            <Slot name="세로로 뒤집기" className="ml-10 w-[26px]"><Svg w={26} h={30}><Line d="M5 1h16l-8 8z" sw={1.800} /><path d="M4 30h18l-9-10z" /><Line d="M0 15h26" sw={2} strokeDasharray="2 2" /></Svg></Slot>
          </div>
        </div>
        <div className="pt-4 pb-[22px]">
          <SectionTitle>맞춤 및 분포</SectionTitle>
          <p className="mt-[14px] flex h-8 items-center pl-4">맞춤:</p>
          <div className="mt-6 flex pl-[13px]">
            <Slot name="왼쪽" className="w-[58px]"><AlignIcon kind="left" /></Slot>
            <Slot name="가운데" className="w-[58px]"><AlignIcon kind="center" /></Slot>
            <Slot name="오른쪽" className="w-[58px]"><AlignIcon kind="right" /></Slot>
            <Slot name="위" className="ml-[34px] w-[58px]"><AlignIcon kind="top" /></Slot>
            <Slot name="중간" className="w-[58px]"><AlignIcon kind="middle" /></Slot>
            <Slot name="아래" className="w-[58px]"><AlignIcon kind="bottom" /></Slot>
          </div>
        </div>
      </div>
      <div className="w-[30px] bg-[#4a4a4a] pt-[6px]"><div className="mx-auto h-[222px] w-5 rounded-full bg-[#696969]" /></div>
    </div>
    <div className="h-[52px]" />
  </section>
);

const IndentField = ({ kind, id }) => (
  <div className="flex items-center gap-[14px]">
    <label htmlFor={id} aria-label={kind}><IndentIcon kind={kind} /></label>
    <Field id={id} value="0 pt" className="w-[110px]" />
  </div>
);

const ParagraphPanel = () => {
  const [hyphen, setHyphen] = useState(false);
  return (
    <section className="border-t-2 border-[#383838] bg-[#535353] pb-[18px]">
      <Tabs names={['단락', '글리프', '문자']} />
      <div className="flex pt-5 pl-11">
        <ParaButton kind="left" active /><ParaButton kind="center" /><ParaButton kind="right" />
        <span className="w-5" />
        <ParaButton kind="jl" /><ParaButton kind="jc" /><ParaButton kind="jr" />
        <span className="w-5" />
        <ParaButton kind="jf" />
      </div>
      <div className="mt-[22px] flex gap-[74px] pl-[13px]"><IndentField kind="left" id="il" /><IndentField kind="right" id="ir" /></div>
      <div className="mt-2 pl-[13px]"><IndentField kind="first" id="if" /></div>
      <div className="mt-[18px] flex gap-[74px] pl-[13px]"><IndentField kind="before" id="ib" /><IndentField kind="after" id="ia" /></div>
      <div className="mt-4 flex items-center gap-[11px] pl-[17px]"><label htmlFor="kinsoku">금칙</label><Select id="kinsoku" value="없음" className="w-[378px]" pad="pl-[14px]" /></div>
      <div className="mt-[6px] flex items-center gap-[11px] pl-[17px]"><label htmlFor="mojikumi">자간</label><Select id="mojikumi" value="없음" className="w-[378px]" pad="pl-[14px]" /></div>
      <label className="mt-6 flex h-6 items-center gap-[18px] pl-5 text-[#f2f2f2]">
        <input type="checkbox" checked={hyphen} onChange={(e) => setHyphen(e.target.checked)} className="h-[22px] w-[22px] appearance-none rounded-md border-2 border-[#8a8a8a] checked:bg-[#2f67b8]" />
        하이픈 넣기
      </label>
    </section>
  );
};

const Panels = () => (
  <aside className="ml-[2px] flex w-[726px] shrink-0 flex-col gap-[2px] border-l-2 border-[#383838] text-[21px] text-[#dedede]">
    <div className="-mb-[2px] flex h-6 shrink-0 items-center justify-end border-b-2 border-[#383838] bg-[#424242] pr-3">
      <Svg w={14} h={12}><Line d="M1 1l5 5-5 5M7 1l5 5-5 5" sw={1.800} /></Svg>
    </div>
    <LayersPanel />
    <PropertiesPanel />
    <ParagraphPanel />
  </aside>
);

const Notification = () => (
  <div className="absolute top-[81px] right-8 z-30 flex h-[142px] w-[688px] items-center gap-5 rounded-[36px] border-2 border-[#5f5d61] bg-[#39363a] bg-[radial-gradient(circle_at_75%_30%,#2f4156_0%,#39363a_28%)] pl-6 leading-8 text-[#ececec] shadow-[0_0_0_2px_#2c2c2c,0_8px_30px_rgba(0,0,0,0.3)]">
    <span className="flex h-[76px] w-[76px] items-center justify-center rounded-[18px] bg-linear-to-b from-[#98989b] to-[#616164] text-white"><FaApple size={46} /></span>
    <div className="text-2xl leading-8">
      <p className="font-bold">Apple ID 설정 업데이트</p>
      <p>계정의 일부 서비스는 사용자가 다시 로그인할<br />때까지 사용할 수 없습니다.</p>
    </div>
  </div>
);

// DOCK
const Tile = ({ fill, children }) => (
  <Svg w={80} h={80}><rect width="80" height="80" rx="18" fill={fill} />{children}</Svg>
);

const dockApps = [
  {
    name: 'Finder', dot: true,
    art: (
      <Tile fill="url(#fBlue)">
        <defs>
          <linearGradient id="fBlue" x2="0" y2="1"><stop offset="0" stopColor="#5ac8f8" /><stop offset="1" stopColor="#2f6fec" /></linearGradient>
        </defs>
        <path d="M43 0h19a18 18 0 0 1 18 18v44a18 18 0 0 1-18 18H50c-3-10-4-22-4-34H34c0-16 3-32 9-46z" fill="#e6e9f0" />
        <path d="M21 23v7M59 23v7" stroke="#1d2733" strokeWidth="3.500" strokeLinecap="round" />
        <path d="M16 53c11 14 37 14 48 0" fill="none" stroke="#16202c" strokeWidth="3" strokeLinecap="round" />
      </Tile>
    ),
  },
  {
    name: '메모', dot: true,
    art: (
      <Tile fill="#f1efeb">
        <path d="M0 20V18A18 18 0 0 1 18 0h44a18 18 0 0 1 18 18v2z" fill="#f9cf4f" />
        <path d="M0 21h80M0 40h80M0 60h80" stroke="#c9c6c0" strokeWidth="1.500" /><path d="M2 24h76" stroke="#bbb" strokeWidth="1.500" strokeDasharray="1.500 2" />
      </Tile>
    ),
  },
  {
    name: 'KakaoTalk',
    art: (
      <Svg w={84} h={84}>
        <rect width="84" height="84" rx="20" fill="#fae34b" />
        <path d="M42 14c18 0 33 11 33 26S60 66 44 66c-6 0-9 0-11-1L22 74l1-13C14 56 9 49 9 40c0-15 15-26 33-26z" fill="#3a1d1e" />
        <text x="42" y="48" textAnchor="middle" fontSize="22" fontWeight="700" fill="#fae34b" fontFamily="Open Sans, sans-serif">TALK</text>
      </Svg>
    ),
  },
  {
    name: 'Creative Cloud',
    art: (
      <span className="flex h-20 w-20 items-center justify-center rounded-[18px] bg-[conic-gradient(from_0deg,#e8352a,#f47b20_60deg,#fbd13a_110deg,#5fd35a_150deg,#6aa0f8_220deg,#8a5cf0_260deg,#e8409c_305deg,#e8352a)] text-white">
        <Svg w={80} h={80}>
          <Line d="M28 61H47A21.500 21.500 0 1 0 28 27 17.200 17.200 0 0 0 28 61" sw={3.500} />
          <Line d="M38 52A10.500 10.500 0 1 1 33 35L47 52A13 13 0 1 0 37 31" sw={6} />
        </Svg>
      </span>
    ),
  },
  {
    name: 'Figma',
    art: (
      <Tile fill="#1b1b1c">
        <path d="M30 12h10v19H30a9.500 9.500 0 0 1 0-19z" fill="#f26b43" /><path d="M40 12h10a9.500 9.500 0 0 1 0 19H40z" fill="#f28b7c" />
        <path d="M30 31h10v19H30a9.500 9.500 0 0 1 0-19z" fill="#9b62f2" /><circle cx="49.500" cy="40.500" r="9.500" fill="#5fbcf8" />
        <path d="M30 50h10v9.500A9.500 9.500 0 1 1 30 50z" fill="#5fd08d" />
      </Tile>
    ),
  },
  {
    name: 'Slack', dot: true,
    art: (
      <Tile fill="#fdfdfd">
        <g strokeWidth="11.500" strokeLinecap="round" fill="none">
          <path d="M18 33h14" stroke="#62c4ec" /><path d="M47.500 18v16" stroke="#58b184" /><path d="M48 48h14" stroke="#e5b34c" /><path d="M33 48v14" stroke="#cf3058" />
        </g>
        <path d="M38 24h-6a6 6 0 1 1 6-6z" fill="#62c4ec" /><path d="M56 38v-6a6 6 0 1 1 6 6z" fill="#58b184" />
        <path d="M42 56h6a6 6 0 1 1-6 6z" fill="#e5b34c" /><path d="M24 42v6a6 6 0 1 1-6-6z" fill="#cf3058" />
      </Tile>
    ),
  },
  {
    name: 'Chrome', dot: true,
    art: (
      <Tile fill="#f2f3f5">
        <path d="M40 40L10.500 23a34 34 0 0 1 59 0z" fill="#da4f40" /><path d="M40 40L40 74a34 34 0 0 1-29.500-51z" fill="#4f9f54" />
        <path d="M40 40l29.500-17A34 34 0 0 1 40 74z" fill="#f3bf48" /><path d="M40 23h29.500L50 50 40 74z" fill="#f3bf48" /><path d="M10.500 23L27 50l13 5-6-28z" fill="#4f9f54" />
        <path d="M10.500 23a34 34 0 0 1 59 0H40c-9 0-14 6-15.500 13z" fill="#da4f40" />
        <circle cx="40" cy="39" r="16.500" fill="#fff" /><circle cx="40" cy="39" r="13" fill="#3f80e8" />
      </Tile>
    ),
  },
  {
    name: 'Notion', dot: true,
    art: (
      <Svg w={82} h={84}>
        <path d="M4 6L56 1c2 0 4 0 6 2l17 14c2 2 2 3 2 5v54c0 3-2 4-5 4l-55 4c-3 0-4-1-6-3L3 65c-2-2-2-4-2-6V10c0-2 1-4 3-4z" fill="#fff" />
        <path d="M6 9l12 15v50L5 59z" fill="#222" /><path d="M9 9l48-4 16 12-54 5z" fill="#fff" stroke="#222" strokeWidth="3" />
        <rect x="19" y="22" width="55" height="53" rx="4" fill="#fff" stroke="#222" strokeWidth="4" transform="skewY(-3) translate(0 3)" />
        <text x="47" y="66" textAnchor="middle" fontSize="50" fontWeight="700" fill="#1c1c1c" fontFamily="Liberation Serif, serif">N</text>
      </Svg>
    ),
  },
  {
    name: '캘린더',
    art: (
      <Tile fill="#f8f7f5">
        <path d="M0 25v-7A18 18 0 0 1 18 0h44a18 18 0 0 1 18 18v7z" fill="#e4604f" />
        <text x="40" y="19" textAnchor="middle" fontSize="16" fontWeight="600" fill="#fff">4월</text>
        <text x="40" y="67" textAnchor="middle" fontSize="47" fontWeight="300" fill="#222">28</text>
      </Tile>
    ),
  },
  {
    name: '채널톡', dot: true,
    art: (
      <Svg w={88} h={88}>
        <circle cx="44" cy="44" r="42" fill="#4634f4" stroke="#fff" strokeWidth="3" />
        <path d="M44 21c14 0 23 10 23 23 0 6-1 10-3 13l3 9-11-2c-4 2-8 3-12 3-13 0-23-10-23-23s10-23 23-23z" fill="#fff" />
        <path d="M37 40v8M52 40v8" stroke="#4634f4" strokeWidth="5.500" strokeLinecap="round" />
      </Svg>
    ),
  },
  null,
  { name: 'Photoshop', dot: true, art: <Tile fill="#0a1e33"><text x="41" y="55" textAnchor="middle" fontSize="46" fontWeight="700" fill="#4ea8fb" fontFamily="Open Sans, sans-serif">Ps</text></Tile> },
  { name: 'Illustrator', art: <Tile fill="#2e0202"><text x="40" y="55" textAnchor="middle" fontSize="46" fontWeight="700" fill="#f49b33" fontFamily="Open Sans, sans-serif">Ai</text></Tile> },
  { name: 'zoom.us', dot: true, art: <Tile fill="#2063ec"><text x="40" y="46" textAnchor="middle" fontSize="22" fontWeight="600" fill="#fff">zoom</text></Tile> },
  null,
  {
    name: '문서',
    art: (
      <Svg w={90} h={76}>
        <path d="M0 12V5c0-3 2-5 5-5h20c3 0 5 1 7 4l3 3h50c3 0 5 2 5 5v8H0z" fill="#55acdd" />
        <rect y="13" width="90" height="63" rx="4" fill="#7accfa" /><rect y="69" width="90" height="7" rx="3" fill="#5fb5e6" />
        <path d="M35 25h10l13 14v20c0 1-1 2-2 2H35c-2 0-3-1-3-2V27c0-1 1-2 3-2zM46 25v14h12" fill="none" stroke="#4c9fd8" strokeWidth="2.500" />
      </Svg>
    ),
  },
  {
    name: '휴지통',
    art: (
      <Svg w={70} h={90}>
        <defs><linearGradient id="bin"><stop offset="0" stopColor="#606366" /><stop offset=".45" stopColor="#a6a9ac" /><stop offset="1" stopColor="#505356" /></linearGradient></defs>
        <path d="M0 12h70l-9 70c-2 9-50 9-52 0z" fill="url(#bin)" /><ellipse cx="35" cy="12" rx="35" ry="9" fill="#54575a" />
        <path d="M5 10l8-8 9 2 4-4 6 4 8-3 6 4 9-2 9 10-8 6-7-3-6 5-7-4-8 6-6-6-9 3z" fill="#e9e9e9" />
        <path d="M18 8l7 5-6 4zM46 6l6 6-9 3zM33 7l3 8-6 3z" fill="#7b8087" /><path d="M24 9l6 1-3 4z" fill="#4cc2e8" /><path d="M44 10l6 2-4 3z" fill="#d2683c" />
      </Svg>
    ),
  },
];

const Dock = () => (
  <nav className="flex h-[140px] shrink-0 items-start justify-center bg-[linear-gradient(#05010a,transparent_50%),linear-gradient(100deg,#0f0630_0%,#0a0320_12%,#0a0318_26%,#110638_29%,#150742_64%,#43116a_67%,#3a0f62_76%,#1a0848_84%,#140640_100%)] pt-[2px]">
    <ul className="flex h-32 rounded-[34px] border-2 border-[#4d3f66] bg-linear-to-r from-[#20163a] via-[#211545] via-65% to-[#44195f] to-80% px-1">
      {dockApps.map((app, i) =>
        app === null ? (
          <li key={i} className="flex w-12 items-center justify-center"><span className="h-24 w-[2px] bg-[#5f4a7e]" /></li>
        ) : (
          <li key={i} className="relative flex w-[106px] justify-center">
            <button aria-label={app.name} className="flex h-[116px] items-center">{app.art}</button>
            {app.dot && <span className="absolute bottom-1 h-2 w-2 rounded-full bg-[#a393c8]" />}
          </li>
        )
      )}
    </ul>
  </nav>
);

const App = () => (
  <div className="relative flex min-h-screen flex-col overflow-hidden bg-black font-['Inter','Noto_Sans_CJK_KR',sans-serif] text-[25px]">
    <MenuBar />
    <div className="mt-[2px] flex flex-1 flex-col overflow-hidden rounded-t-[20px] border-2 border-[#383838] bg-[#4b4b4b]">
      <div className="relative flex h-11 shrink-0 items-center justify-center border-b-2 border-[#383838] bg-[#535353]">
        <div className="absolute left-4 flex gap-4">
          <button aria-label="닫기" className="flex h-6 w-6 items-center justify-center rounded-full bg-[#ed6a5e]"><span className="h-2 w-2 rounded-full bg-[#6b1410]" /></button>
          <button aria-label="최소화" className="h-6 w-6 rounded-full bg-[#f5bd4f]" />
          <button aria-label="확대" className="h-6 w-6 rounded-full bg-[#61c454]" />
        </div>
        <h1 className="text-[#e3e3e3]">Adobe Photoshop 2023</h1>
      </div>
      <OptionsBar />
      <div className="flex flex-1 border-t-2 border-[#383838]">
        <Toolbar />
        <Document />
        <Panels />
      </div>
    </div>
    <Dock />
    <Notification />
  </div>
);

export default App;
